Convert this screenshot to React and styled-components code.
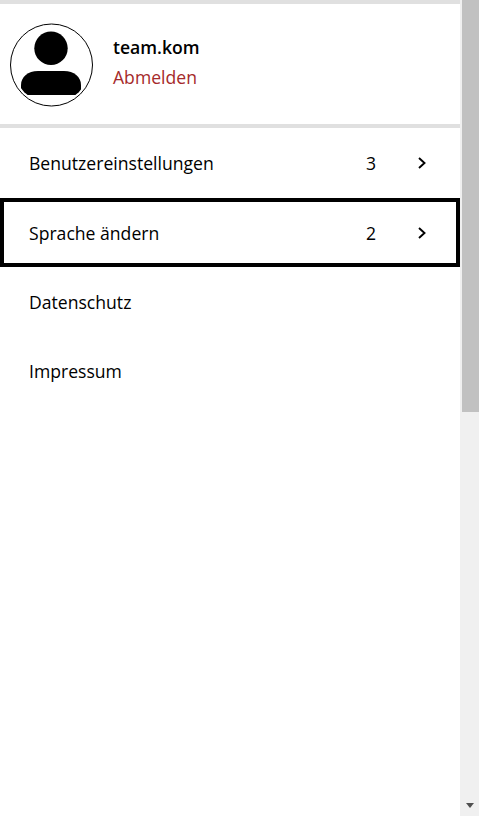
import React from 'react';
import styled, { createGlobalStyle } from 'styled-components';

const GlobalStyle = createGlobalStyle`
  html, body {
    margin: 0;
    padding: 0;
    height: 100%;
    overflow: hidden;
    background: #fff;
  }
  body {
    font-family: "Open Sans", "Liberation Sans", sans-serif;
    color: #000;
  }
`;

const Page = styled.div`
  display: flex;
  width: 479px;
  height: 816px;
`;

const Menu = styled.nav`
  flex: 0 0 460px;
  width: 460px;
`;

const Profile = styled.header`
  display: flex;
  align-items: center;
  height: 120px;
  padding-left: 10px;
  gap: 19px;
  border-top: 4px solid #e0e0e0;
  border-bottom: 4px solid #e0e0e0;
`;

const Avatar = styled.svg`
  display: block;
  width: 84px;
  height: 84px;
  flex: none;
  margin-top: 2px;
`;

const ProfileText = styled.div`
  display: flex;
  flex-direction: column;
  gap: 9px;
  margin-bottom: 4px;
`;

const UserName = styled.div`
  font-size: 17.6px;
  line-height: 21px;
  font-weight: 600;
`;

const Logout = styled.a`
  font-size: 17.6px;
  line-height: 21px;
  color: #a52a2a;
`;

const List = styled.ul`
  list-style: none;
  margin: 0;
  padding: 0;
`;

const Row = styled.li`
  display: flex;
  align-items: center;
  box-sizing: border-box;
  height: 69px;
  padding: 0 29px;
  font-size: 17.6px;
  ${(p) => p.$focused && `
    margin-top: 1px;
    padding: 0 25px;
    border: 4px solid #000;
  `}
`;

const Label = styled.span`
  flex: 1;
`;

const Count = styled.span`
  width: 12px;
  margin-right: 40px;
  text-align: center;
`;

const Chevron = styled.svg`
  display: block;
  width: 10px;
  height: 12px;
  flex: none;
  margin-right: 4px;
`;

const Scrollbar = styled.div`
  flex: 1;
  position: relative;
  background: #f0f0f0;
`;

const Thumb = styled.div`
  position: absolute;
  top: 0;
  left: 2px;
  right: 0;
  height: 412px;
  background: #c1c1c1;
`;

const ArrowDown = styled.div`
  position: absolute;
  bottom: 8px;
  left: 6px;
  width: 0;
  height: 0;
  border-left: 4.5px solid transparent;
  border-right: 4.5px solid transparent;
  border-top: 5px solid #505050;
`;

const items = [
  { label: 'Benutzereinstellungen', count: 3 },
  { label: 'Sprache ändern', count: 2, focused: true },
  { label: 'Datenschutz' },
  { label: 'Impressum' },
];

function ChevronIcon() {
  return (
    <Chevron viewBox="0 0 10 12">
      <path d="M2 1l5.5 5L2 11" fill="none" stroke="#000" strokeWidth="1.9" />
    </Chevron>
  );
}

export default function App() {
  return (
    <>
      <GlobalStyle />
      <Page>
        <Menu>
          <Profile>
            <Avatar viewBox="0 0 84 84">
              <defs>
                <clipPath id="avatar-clip">
                  <circle cx="41.5" cy="42" r="38.5" />
                </clipPath>
              </defs>
              <circle cx="41.5" cy="42" r="41" fill="#fff" stroke="#000" strokeWidth="1" />
              <circle cx="41" cy="25.3" r="16.7" fill="#000" />
              <path
                d="M11 72 V62 C11 54 18 48 28 48 H54 C64 48 71 54 71 62 V72 Z"
                fill="#000"
                clipPath="url(#avatar-clip)"
              />
            </Avatar>
            <ProfileText>
              <UserName>team.kom</UserName>
              <Logout>Abmelden</Logout>
            </ProfileText>
          </Profile>
          <List>
            {items.map((item) => (
              <Row key={item.label} $focused={item.focused}>
                <Label>{item.label}</Label>
                {item.count && <Count>{item.count}</Count>}
                {item.count && <ChevronIcon />}
              </Row>
            ))}
          </List>
        </Menu>
        <Scrollbar>
          <Thumb />
          <ArrowDown />
        </Scrollbar>
      </Page>
    </>
  );
}
